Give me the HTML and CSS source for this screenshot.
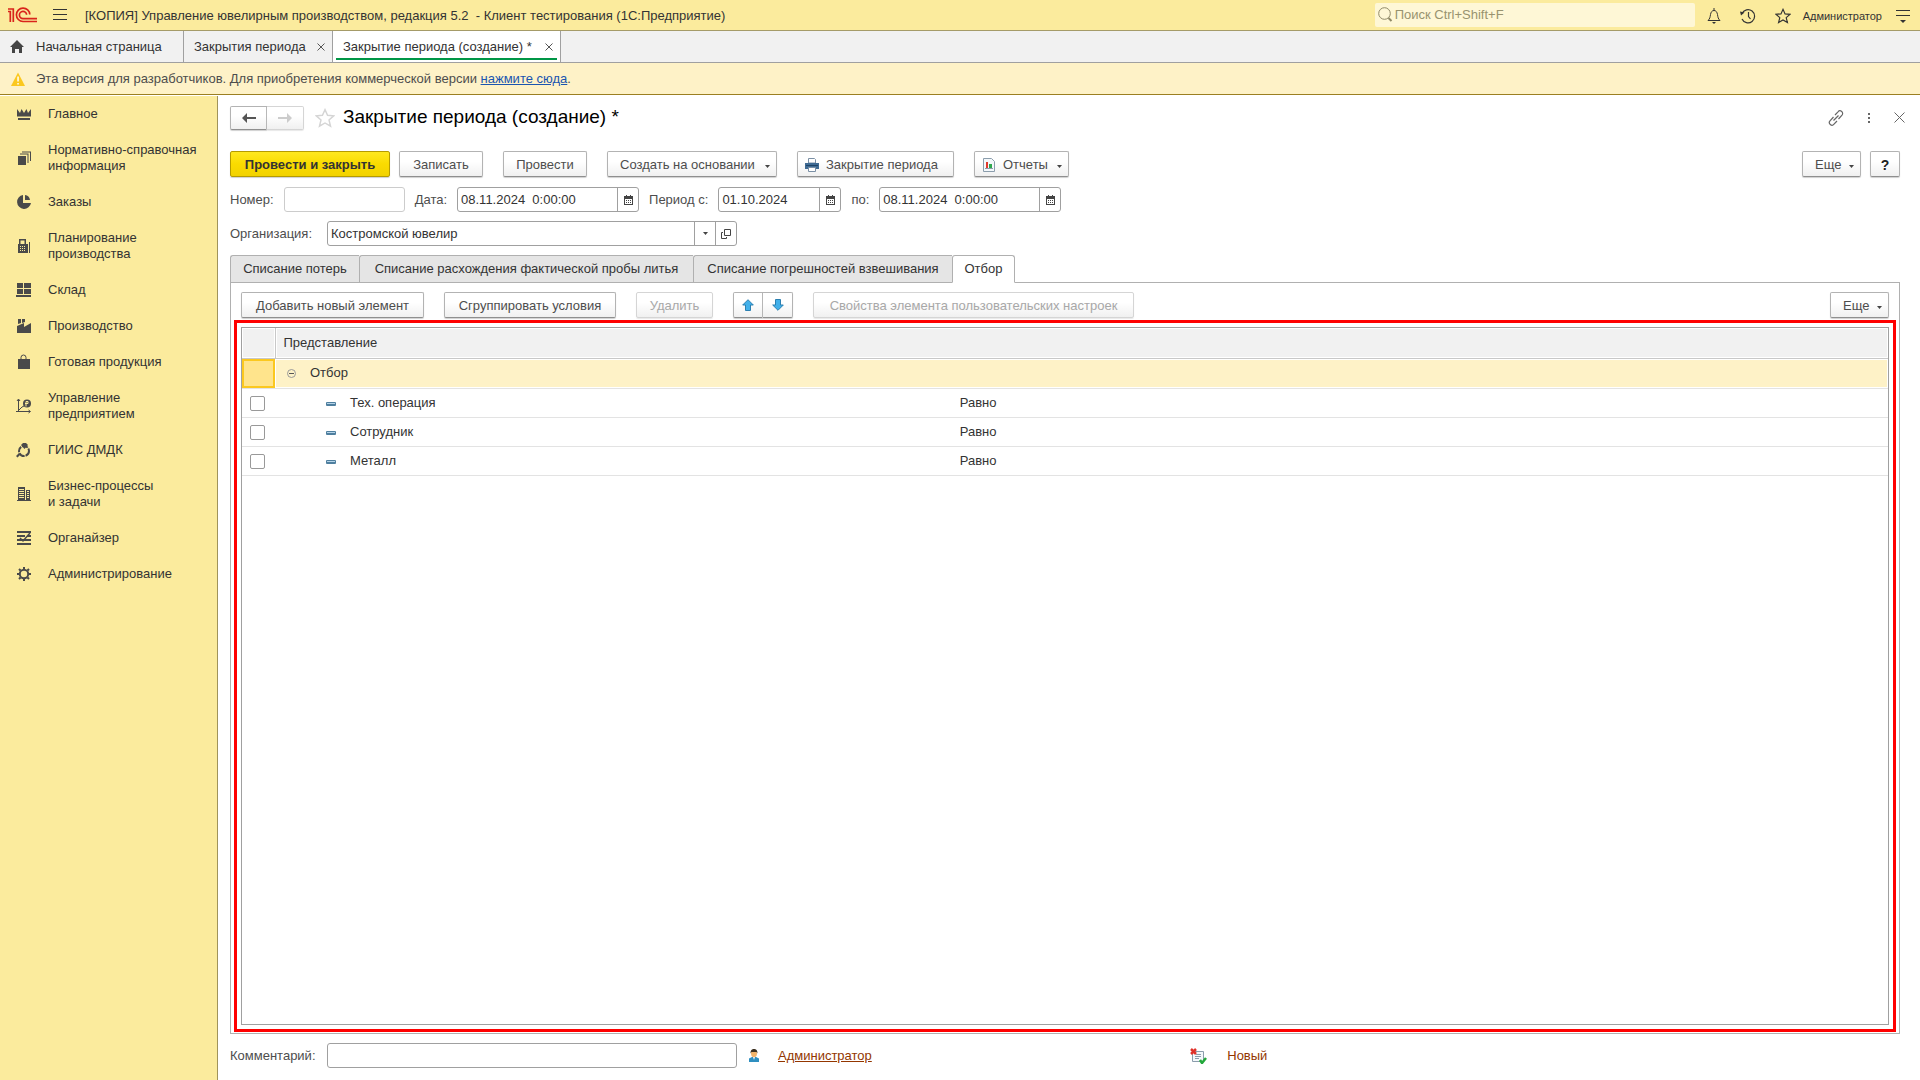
FILE: index.html
```html
<!DOCTYPE html>
<html lang="ru">
<head>
<meta charset="utf-8">
<title>Закрытие периода (создание) *</title>
<link rel="stylesheet" href="styles.css">
</head>
<body>
<svg class="defs" aria-hidden="true">
  <symbol id="calendar" viewBox="0 0 9 10"><path fill="#444" fill-rule="evenodd" d="M0 1h2V0h1v1h3V0h1v1h2v9H0zM1 4v5h7V4z"/><path fill="#444" d="M2 5h1v1H2zM4 5h1v1H4zM6 5h1v1H6zM2 7h1v1H2zM4 7h1v1H4zM6 7h1v1H6z"/></symbol>
  <symbol id="caret" viewBox="0 0 5 3"><path fill="#444" d="M0 0h5L2.500 3z"/></symbol>
  <symbol id="cross" viewBox="0 0 8 8"><path stroke="#555" d="M.5.5l7 7M7.500.5l-7 7"/></symbol>
  <symbol id="star" viewBox="0 0 18 18"><path fill="none" stroke-width="1.3" stroke-linejoin="miter" d="M9 1.500l2.300 5.100 5.500.5-4.200 3.700 1.400 5.600L9 13.500l-5 2.900 1.400-5.600L1.200 7.100l5.500-.5z"/></symbol>
  <symbol id="dash" viewBox="0 0 10 4"><rect width="10" height="4" rx="1" fill="#4f7f9f"/><rect x="1" y="1" width="8" height="1" fill="#b5d3e8"/></symbol>
</svg>

<header class="titlebar">
  <svg class="logo" viewBox="0 0 30 16" fill="none" stroke="#d9241b" stroke-width="1.700"><path d="M0 4.500h2.300V15M0 2h5.300v13M21.800 7.500A6.700 6.700 0 1 0 15 14.500h14M18.600 7.800A3.600 3.600 0 1 0 15 11.600h14"/></svg>
  <button class="bare" aria-label="Меню"><svg width="14" height="12" stroke="#333"><path d="M0 .5h14M0 5.500h14M0 10.500h14"/></svg></button>
  <span class="apptitle">[КОПИЯ] Управление ювелирным производством, редакция 5.2&nbsp; - Клиент тестирования (1С:Предприятие)</span>
  <label class="search"><svg width="15" height="16" fill="none" stroke="#8f8967"><circle cx="6.500" cy="6.500" r="5.800"/><path stroke-width="2" d="M10.500 11l3 3"/></svg><input type="text" placeholder="Поиск Ctrl+Shift+F" aria-label="Поиск"></label>
  <div class="systools">
    <button class="bare" aria-label="Уведомления"><svg width="14" height="16" fill="none" stroke="#333"><path d="M1 12.500c2-2 2-3 2.500-6C4 4 5 2.500 7 2.500S10 4 10.500 6.500c.5 3 .5 4 2.500 6zM7 0v2.500"/><path fill="#333" stroke="none" d="M5 14h4l-2 2z"/></svg></button>
    <button class="bare" aria-label="История"><svg width="16" height="16" fill="none" stroke="#333" stroke-width="1.200"><path d="M2 5.500A6.600 6.600 0 1 1 2 11M8.500 4v4.500l2 2.500"/><path fill="#333" stroke="none" d="M0 3.500l4.500 1L1 7.500z"/></svg></button>
    <button class="bare" aria-label="Избранное"><svg class="star dark" width="16" height="16"><use href="#star"/></svg></button>
    <a class="user" href="#">Администратор</a>
    <button class="bare" aria-label="Настройки"><svg width="14" height="14"><path stroke="#333" d="M0 1.500h14M0 6.500h14"/><path fill="#333" d="M4 11h6l-3 3z"/></svg></button>
  </div>
</header>

<nav class="windows">
  <a class="wtab home" href="#"><svg width="14" height="13"><path fill="#444" d="M7 0l7 7h-2v6H9V9H5v4H2V7H0z"/></svg>Начальная страница</a>
  <div class="wtab list"><a href="#">Закрытия периода</a><button class="bare" aria-label="Закрыть"><svg width="8" height="8"><use href="#cross"/></svg></button></div>
  <div class="wtab current"><a href="#">Закрытие периода (создание) *</a><button class="bare" aria-label="Закрыть"><svg width="8" height="8"><use href="#cross"/></svg></button></div>
</nav>

<div class="notice">
  <svg width="14" height="14"><path fill="#fbc81f" d="M7 0.500L14 14H0z"/><path fill="#fff" d="M6.300 4.500h1.500v5H6.300zM6.300 11h1.500v1.500H6.300z"/></svg>
  <p>Эта версия для разработчиков. Для приобретения коммерческой версии <a href="#">нажмите сюда</a>.</p>
</div>

<div class="workspace">
  <nav class="sections">
    <a href="#"><svg viewBox="0 0 16 16"><path d="M1 3l3 4 1.500-4L8 7l2.500-4L12 7l3-4v7.500H1zM2 12h12v2H2z"/></svg>Главное</a>
    <a href="#"><svg viewBox="0 0 16 16"><path d="M2 6h8v9H2zM4 3.500h8.500V13h-1V4.500H4zM6 1.500h9V11h-1V2.500H6z"/></svg>Нормативно-справочная<br>информация</a>
    <a href="#"><svg viewBox="0 0 16 16"><path d="M7 1a7 7 0 1 0 8 8H7zM9 1v5h5A6 6 0 0 0 9 1z"/></svg>Заказы</a>
    <a href="#"><svg viewBox="0 0 16 16"><path fill-rule="evenodd" d="M3 6V1h7v5h2v9H2V6zM4.500 2.500V6h4V2.500zM4 8h1v1H4zM6 8h1v1H6zM8 8h1v1H8zM4 10h1v1H4zM6 10h1v1H6zM8 10h1v1H8zM4 12h1v1H4zM6 12h1v1H6zM8 12h1v1H8zM13 4h1v11h-1z"/></svg>Планирование<br>производства</a>
    <a href="#"><svg viewBox="0 0 16 16"><path d="M1 1h6v5H1zM8 1h7v5H8zM1 7h6v5H1zM8 7h7v5H8zM0 13h15v2H0z"/></svg>Склад</a>
    <a href="#"><svg viewBox="0 0 16 16"><path d="M2 1h3v4l-3 1zM6 1h3v3L6 5zM1 8l7-3v4l7-4v10H1z"/></svg>Производство</a>
    <a href="#"><svg viewBox="0 0 16 16"><path d="M2 5h12v10H2z"/><path fill="none" stroke="#4a4a4a" d="M5 6V3.500a2.500 2.500 0 0 1 5 0V6"/></svg>Готовая продукция</a>
    <a href="#"><svg viewBox="0 0 16 16"><path fill="none" stroke="#4a4a4a" d="M2.500 1.500v12.500M0 13.500h14M1 3l1.500-2L4 3M12.500 12l2 1.500-2 1.500M3 12l3-3 2-1"/><circle cx="11" cy="5.500" r="4"/><path stroke="#fbeb9d" d="M10 3.500h2v2h-3M10 3.500v5" fill="none"/></svg>Управление<br>предприятием</a>
    <a href="#"><svg viewBox="0 0 16 16"><circle cx="8" cy="9" r="5" fill="none" stroke="#4a4a4a" stroke-width="2" stroke-dasharray="6 1"/><path d="M5 3l2-2h3l2 2-3.500 4zM0 14l3-3 1.500 1.500-3 3z"/></svg>ГИИС ДМДК</a>
    <a href="#"><svg viewBox="0 0 16 16"><path fill-rule="evenodd" d="M2 1h7v13H2zM3 3v1h5V3zM3 5v1h5V5zM3 7v1h5V7zM3 9v1h5V9zM3 11v1h5v-1zM10 4h4v10h-4zM11 5v1h2V5zM11 7v1h2V7zM11 9v1h2V9zM11 11v1h2v-1zM1 14h14v1H1z"/></svg>Бизнес-процессы<br>и задачи</a>
    <a href="#"><svg viewBox="0 0 16 16"><path d="M1 1h14v2H1zM1 5h8v2H1zM11 5h4v2h-4zM1 9h14v2H1zM1 13h14v2H1z"/><path fill="none" stroke="#4a4a4a" stroke-width="1.500" d="M14 3L7 11 4 8"/></svg>Органайзер</a>
    <a href="#"><svg viewBox="0 0 16 16"><circle cx="8" cy="8" r="4.200" fill="none" stroke="#4a4a4a" stroke-width="2"/><path stroke="#4a4a4a" stroke-width="2" d="M8 1v2M8 13v2M1 8h2M13 8h2M3 3l1.500 1.500M11.500 11.500L13 13M3 13l1.500-1.500M11.500 4.500L13 3"/></svg>Администрирование</a>
  </nav>

  <main class="form">
    <div class="heading">
      <div class="pair nav"><button class="btn" aria-label="Назад"><svg width="14" height="10"><path fill="#555" d="M0 5l5-5v4h9v2H5v4z"/></svg></button><button class="btn" aria-label="Вперед" disabled><svg width="14" height="10"><path fill="#ccc" d="M14 5L9 0v4H0v2h9v4z"/></svg></button></div>
      <svg class="star pale" width="20" height="20" viewBox="0 0 18 18"><use href="#star"/></svg>
      <h1>Закрытие периода (создание) *</h1>
      <div class="formtools">
        <button class="bare" aria-label="Ссылка"><svg width="16" height="16" fill="none" stroke="#666" stroke-width="1.200"><path d="M7 5l3-3.200a2.500 2.500 0 0 1 4 3.400L10.500 9M9 11l-3 3.200a2.500 2.500 0 0 1-4-3.400L5.500 7M5.500 10.500l5-5"/></svg></button>
        <button class="bare" aria-label="Еще действия"><svg width="2" height="10" fill="#666"><path d="M0 0h2v2H0zM0 4h2v2H0zM0 8h2v2H0z"/></svg></button>
        <button class="bare" aria-label="Закрыть форму"><svg width="11" height="11" stroke="#666"><path d="M.5.5l10 10M10.500.5l-10 10"/></svg></button>
      </div>
    </div>

    <div class="commands">
      <div class="group"><button class="btn primary w160">Провести и закрыть</button><button class="btn w84">Записать</button></div>
      <button class="btn w84">Провести</button>
      <button class="btn drop w170">Создать на основании<svg class="caret"><use href="#caret"/></svg></button>
      <button class="btn print w157"><svg width="14" height="14"><path fill="#fff" stroke="#7a8fa5" d="M3.500.5h6l1 1V5h-7z"/><path fill="#3f6b94" d="M0 5h14v6H0z"/><path fill="#1f4468" d="M1 7h12v1H1z"/><path fill="#fff" stroke="#7a8fa5" d="M3.500 9.500h7v4h-7z"/></svg>Закрытие периода</button>
      <button class="btn drop report w95"><svg width="12" height="14"><path fill="#f4f8fb" stroke="#8b9dac" d="M.5.500h8l3 3v10H.5z"/><path fill="#e03a2d" d="M3 4h2v6H3z"/><path fill="#2fa84f" d="M6 6h3v4H6z"/><path stroke="#8b9dac" d="M2 10.500h8"/></svg>Отчеты<svg class="caret"><use href="#caret"/></svg></button>
      <div class="group end"><button class="btn drop more">Еще<svg class="caret"><use href="#caret"/></svg></button><button class="btn help" aria-label="Справка">?</button></div>
    </div>

    <div class="fields">
      <label for="num">Номер:</label><input class="box number" id="num" type="text">
      <label for="date">Дата:</label><div class="box datetime"><input id="date" type="text" value="08.11.2024  0:00:00"><button aria-label="Выбрать дату"><svg width="9" height="10"><use href="#calendar"/></svg></button></div>
      <label for="from">Период с:</label><div class="box date"><input id="from" type="text" value="01.10.2024"><button aria-label="Выбрать начало"><svg width="9" height="10"><use href="#calendar"/></svg></button></div>
      <label for="to">по:</label><div class="box datetime"><input id="to" type="text" value="08.11.2024  0:00:00"><button aria-label="Выбрать окончание"><svg width="9" height="10"><use href="#calendar"/></svg></button></div>
    </div>

    <div class="fields wide">
      <label for="org">Организация:</label><div class="box long"><input id="org" type="text" value="Костромской ювелир"><button aria-label="Список"><svg class="caret"><use href="#caret"/></svg></button><button aria-label="Открыть"><svg width="10" height="10" fill="none" stroke="#444"><path d="M3.500.5h6v6h-6zM2 3.500H.5v6h5V8"/></svg></button></div>
    </div>

    <div class="tabs" role="tablist">
      <button class="w129" role="tab">Списание потерь</button><button class="w334" role="tab">Списание расхождения фактической пробы литья</button><button class="w259" role="tab">Списание погрешностей взвешивания</button><button class="w63" role="tab" aria-selected="true">Отбор</button>
    </div>

    <section class="panel">
      <div class="commands inner">
        <button class="btn w183">Добавить новый элемент</button>
        <button class="btn w172">Сгруппировать условия</button>
        <button class="btn w77" disabled>Удалить</button>
        <div class="pair"><button class="btn" aria-label="Вверх"><svg width="12" height="12"><path fill="#41b0ea" stroke="#2b7fb0" d="M6 .7L11.300 6H8.500v5.500h-5V6H.7z"/></svg></button><button class="btn" aria-label="Вниз"><svg width="12" height="12"><path fill="#41b0ea" stroke="#2b7fb0" d="M6 11.300L11.300 6H8.500V.5h-5V6H.7z"/></svg></button></div>
        <button class="btn w321" disabled>Свойства элемента пользовательских настроек</button>
        <div class="group end"><button class="btn drop more">Еще<svg class="caret"><use href="#caret"/></svg></button></div>
      </div>
      <div class="highlight">
        <div class="grid">
          <table>
            <colgroup><col class="c-mark"><col class="c-name"><col></colgroup>
            <thead><tr><th class="mark"></th><th colspan="2">Представление</th></tr></thead>
            <tbody>
              <tr class="root"><td class="mark"></td><td colspan="2"><div class="cell"><svg width="9" height="9" fill="none" stroke="#999"><circle cx="4.500" cy="4.500" r="4"/><path stroke="#555" d="M2 4.500h5"/></svg>Отбор</div></td></tr>
              <tr><td class="mark"><input type="checkbox" aria-label="Тех. операция"></td><td><div class="cell leaf"><svg width="10" height="4"><use href="#dash"/></svg>Тех. операция</div></td><td>Равно</td></tr>
              <tr><td class="mark"><input type="checkbox" aria-label="Сотрудник"></td><td><div class="cell leaf"><svg width="10" height="4"><use href="#dash"/></svg>Сотрудник</div></td><td>Равно</td></tr>
              <tr><td class="mark"><input type="checkbox" aria-label="Металл"></td><td><div class="cell leaf"><svg width="10" height="4"><use href="#dash"/></svg>Металл</div></td><td>Равно</td></tr>
            </tbody>
          </table>
        </div>
      </div>
    </section>

    <footer class="fields wide foot">
      <div class="half"><label for="comment">Комментарий:</label><input class="box long" id="comment" type="text">
      <svg class="person" width="10" height="13"><path fill="#2f8fc0" d="M0 13V9.500L3 8h4l3 1.500V13z"/><path fill="#fff" d="M4 8h2l-1 3z"/><ellipse cx="5" cy="4.500" rx="3" ry="3.700" fill="#f3b46a"/><path fill="#3c3020" d="M1.500 4.500C1.500 1 3 0 5 0s3.500 1 3.500 4.500L7.500 3H2.500z"/></svg>
      <a href="#">Администратор</a></div>
      <div class="half"><svg class="state" width="17" height="16"><path fill="#f4f8fb" stroke="#8b9dac" d="M2.500 3.500h11v10h-11z"/><path stroke="#8b9dac" d="M6 6.500h5M5 8.500h6M5 10.500h4"/><path stroke="#e0312a" stroke-width="2.500" d="M1 1l5 5M6 1L1 6"/><path fill="none" stroke="#22a83a" stroke-width="2.500" d="M10 12l2 3 4-5"/></svg><span class="status">Новый</span></div>
    </footer>
  </main>
</div>
</body>
</html>
```
FILE: styles.css
```css
* { box-sizing: border-box; }
body {
  margin: 0;
  min-height: 100vh;
  display: flex;
  flex-direction: column;
  background: #fff;
  color: #333;
  font: 13px/16px "Liberation Sans", Arial, sans-serif;
}
button, input { font: inherit; color: inherit; }
a { color: inherit; text-decoration: none; }
svg { display: block; flex: none; }
.defs { position: absolute; width: 0; height: 0; }
.bare { display: flex; padding: 0; border: 0; background: none; }
.caret { width: 5px; height: 3px; }
.star.dark { stroke: #333; }
.star.pale { stroke: #d5d5d5; }

.titlebar {
  display: flex;
  align-items: center;
  height: 31px;
  padding: 0 10px 0 8px;
  background: #fbeb9d;
  border-bottom: 1px solid #a59b68;
}
.logo { width: 30px; height: 16px; margin-right: 15px; }
.apptitle { margin-left: 18px; padding-top: 2px; }
.search {
  display: flex;
  align-items: center;
  gap: 2px;
  width: 320px;
  height: 24px;
  margin-left: auto;
  padding-left: 3px;
  background: #fef7d6;
  border-radius: 2px;
}
.search input { flex: 1; min-width: 0; padding: 0; border: 0; background: none; outline: 0; }
.search input::placeholder { color: #98936f; opacity: 1; }
.systools { display: flex; align-items: center; gap: 19px; margin-left: 12px; padding-top: 2px; }
.user { font-size: 11px; margin: 0 -5px 0 -7px; }

.windows { display: flex; height: 32px; background: #f1f1f1; border-bottom: 1px solid #a0a0a0; }
.wtab {
  display: flex;
  align-items: center;
  justify-content: space-between;
  padding: 0 7px 0 10px;
  border-right: 1px solid #a0a0a0;
}
.wtab.home { justify-content: flex-start; gap: 12px; width: 184px; }
.wtab.list { width: 149px; }
.wtab.current { width: 228px; background: linear-gradient(#009646, #009646) 3px 27px / calc(100% - 6px) 2px no-repeat #fff; }

.notice {
  display: flex;
  align-items: center;
  gap: 11px;
  height: 32px;
  padding-left: 11px;
  background: #fef2c7;
  border-bottom: 1px solid #9b7f21;
  color: #4d4d4d;
}
.notice p { margin: 0; }
.notice a { color: #1a55b0; text-decoration: underline; }

.workspace { flex: 1; display: flex; padding-top: 1px; }
.sections { flex: none; width: 218px; background: #fbeb9d; border-right: 1px solid #a0935a; }
.sections a { display: flex; align-items: center; gap: 16px; padding: 10px 0 10px 16px; }
.sections svg { width: 16px; height: 16px; fill: #4a4a4a; }

.form { flex: 1; min-width: 0; display: flex; flex-direction: column; padding: 9px 20px 12px 12px; }
.heading { display: flex; align-items: center; height: 25px; }
.heading h1 { margin: 0 0 2px 8px; font-size: 19px; line-height: 24px; font-weight: 400; color: #000; }
.heading .pale { margin-left: 11px; }
.formtools { display: flex; align-items: center; gap: 24px; margin: 0 -5px 0 auto; }

.btn {
  display: flex;
  align-items: center;
  justify-content: center;
  height: 26px;
  padding: 1px 0 0;
  border: 1px solid #b3b3b3;
  border-bottom-color: #8f8f8f;
  border-radius: 2px;
  background: linear-gradient(#fff 40%, #f0f0f0);
  box-shadow: 0 1px 1px #d0d0d0;
  color: #4d4d4d;
  white-space: nowrap;
}
.btn:disabled { border-color: #d5d5d5; color: #a8a8a8; box-shadow: 0 1px 1px #e8e8e8; }
.btn.primary { background: linear-gradient(#ffe81f, #fadb00 50%, #f2d200); border-color: #b59b00; color: #333; font-weight: 700; }
.btn.drop { justify-content: space-between; padding-left: 12px; padding-right: 6px; }
.btn.drop .caret { margin-top: 3px; }
.btn.print { justify-content: flex-start; gap: 7px; padding-left: 7px; }
.btn.report { justify-content: flex-start; gap: 8px; padding-left: 8px; }
.btn.report .caret { margin-left: auto; }
.btn.help { width: 30px; font-size: 14px; font-weight: 700; color: #222; }
.pair { display: flex; }
.pair .btn { width: 30px; padding: 0; }
.pair .btn:first-child { border-radius: 2px 0 0 2px; }
.pair .btn:last-child { border-left: 0; border-radius: 0 2px 2px 0; }
.nav .btn { width: 37px; height: 24px; }

.w63 { min-width: 63px; }
.w77 { min-width: 77px; }
.w84 { min-width: 84px; }
.w95 { min-width: 95px; }
.w129 { min-width: 129px; }
.w157 { min-width: 157px; }
.w160 { min-width: 160px; }
.w170 { min-width: 170px; }
.w172 { min-width: 172px; }
.w183 { min-width: 183px; }
.w259 { min-width: 259px; }
.w321 { min-width: 321px; }
.w334 { min-width: 334px; }

.commands { display: flex; gap: 20px; margin-top: 21px; }
.group { display: flex; gap: 9px; }
.end { margin-left: auto; }
.more { width: 59px; }

.fields { display: flex; align-items: center; gap: 10px; margin-top: 10px; color: #4d4d4d; }
.box { display: flex; height: 25px; border: 1px solid #a0a0a0; border-radius: 3px; background: #fff; color: #333; }
.box input { flex: 1; min-width: 0; padding: 0 3px; border: 0; background: none; outline: 0; white-space: pre; }
.box button { display: flex; align-items: center; justify-content: center; width: 21px; padding: 0; border: 0; border-left: 1px solid #a0a0a0; background: none; }
.number { width: 121px; border-color: #ccc; }
.datetime { width: 182px; }
.date { width: 123px; }
.long { width: 410px; }
.wide { margin-top: 9px; }
.wide label { width: 97px; }
.wide { gap: 0; }

.tabs { display: flex; margin-top: 9px; position: relative; z-index: 1; }
.tabs button {
  height: 28px;
  padding: 0;
  border: 1px solid #b0b0b0;
  border-right: 0;
  border-radius: 3px 0 0 0;
  background: #e5e5e5;
}
.tabs button[aria-selected] { border-right: 1px solid #b0b0b0; border-bottom-color: #fff; border-radius: 3px 3px 0 0; background: #fff; }

.panel { flex: 1; display: flex; flex-direction: column; margin-top: -1px; padding: 0 3px 1px; border: 1px solid #b0b0b0; }
.inner { margin: 9px 7px 0; }
.highlight { flex: 1; display: flex; margin-top: 2px; padding: 4px; border: 3px solid #f00; }
.grid { flex: 1; border: 1px solid #a0a0a0; }
table { width: 100%; border-collapse: collapse; table-layout: fixed; }
.c-mark { width: 33px; }
.c-name { width: 41.600%; }
th, td { height: 29px; padding: 0; border-bottom: 1px solid #e3e3e3; text-align: left; font-weight: 400; }
th { height: 30px; padding-left: 8px; background: #f1f1f1; border-bottom-color: #c8c8c8; box-shadow: inset 0 0 0 1px #fff; }
th.mark { border-right: 1px solid #c8c8c8; }
.root td { height: 30px; background: #fef2c7; box-shadow: inset 0 0 0 1px #fff; }
.root td.mark { background: #ffe48c; box-shadow: inset 0 0 0 2px #fbc81f; }
.cell { display: flex; align-items: center; gap: 14px; padding-left: 12px; }
.leaf { padding-left: 51px; }
.leaf svg { margin-top: 2px; }
td.mark input {
  appearance: none;
  display: block;
  width: 15px;
  height: 15px;
  margin: 2px 0 0 8px;
  border: 1px solid #999;
  border-radius: 2px;
  background: #fff;
}

.foot a { color: #933600; text-decoration: underline; }
.half { flex: 1; display: flex; align-items: center; }
.half:first-child { flex: 0 0 57.500%; }
.person { margin: 0 19px 0 12px; }
.state { margin-right: 20px; }
.status { color: #933600; }
```
